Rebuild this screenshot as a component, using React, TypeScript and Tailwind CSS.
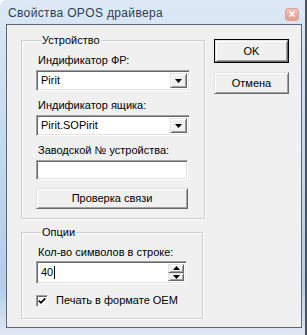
import React from "react";

const font = { fontFamily: '"Liberation Sans", Arial, sans-serif' };

const sunken =
  "border border-t-[#a0a0a0] border-l-[#a0a0a0] border-r-white border-b-white shadow-[inset_1px_1px_0_#696969,inset_-1px_-1px_0_#e3e3e3] bg-white";
const raised =
  "border border-t-[#e3e3e3] border-l-[#e3e3e3] border-r-[#696969] border-b-[#696969] shadow-[inset_1px_1px_0_#ffffff,inset_-1px_-1px_0_#a0a0a0] bg-[#f0f0f0]";

function Down() {
  return (
    <svg width="7" height="4" viewBox="0 0 7 4">
      <path d="M0 0H7L3.5 4Z" fill="#000" />
    </svg>
  );
}

function Combo({ value }: { value: string }) {
  return (
    <div className={`${sunken} h-[21px] w-[154px] flex items-center p-[2px]`}>
      <div className="flex-1 pl-[2px] text-[11px] text-black leading-none">{value}</div>
      <div className={`${raised} w-[17px] h-full flex items-center justify-center`}>
        <Down />
      </div>
    </div>
  );
}

function Label({ children, mt }: { children: React.ReactNode; mt: string }) {
  return <div className={`text-[11px] leading-[13px] h-[13px] text-black ml-[2px] ${mt}`}>{children}</div>;
}

function Group({ title, children, className }: { title: string; children: React.ReactNode; className?: string }) {
  return (
    <fieldset
      className={`border border-[#cdcdcd] shadow-[1px_1px_0_#ffffff,inset_1px_1px_0_#ffffff] px-[14px] ${className ?? ""}`}
    >
      <legend className="ml-[5px] px-[1px] text-[11px] leading-[13px] text-black">{title}</legend>
      {children}
    </fieldset>
  );
}

export default function App() {
  return (
    <div
      style={font}
      className="w-[307px] h-[335px] flex flex-col bg-[linear-gradient(180deg,#dce8f5_0%,#c6daef_40%,#b3cdea_85%,#dfe7f0_100%)] border-r-2 border-r-[#4a5260] rounded-tl-[6px] overflow-hidden"
    >
      <div className="h-[24px] shrink-0 flex items-center justify-between pl-[8px] pr-[6px]">
        <span className="text-[12px] text-[#2c3e57] tracking-[0.35px] mt-[1px]">Свойства OPOS драйвера</span>
        <div className="mt-[4px] w-[14px] h-[13px] rounded-[3px] bg-[linear-gradient(180deg,#f3c0b7,#e79a8e)] border border-[#d9a39b] flex items-center justify-center">
          <svg width="6" height="6" viewBox="0 0 6 6">
            <path d="M0.5 0.5L5.5 5.5M5.5 0.5L0.5 5.5" stroke="#fff" strokeWidth="1.5" />
          </svg>
        </div>
      </div>
      <div className="flex-1 ml-[6px] mr-[3px] mb-[7px] border border-[#5a6775] bg-[#f0f0f0] flex pl-[14px] pr-[11px] pt-[9px]">
        <div className="w-[182px] flex flex-col gap-[7px]">
          <Group title="Устройство" className="pb-[9px]">
            <Label mt="mt-[7px]">Индификатор ФР:</Label>
            <div className="mt-[3px]">
              <Combo value="Pirit" />
            </div>
            <Label mt="mt-[8px]">Индификатор ящика:</Label>
            <div className="mt-[3px]">
              <Combo value="Pirit.SOPirit" />
            </div>
            <Label mt="mt-[8px]">Заводской № устройства:</Label>
            <div className={`${sunken} mt-[3px] h-[20px] w-[152px]`} />
            <div className={`${raised} mt-[8px] h-[21px] w-[152px] flex items-center justify-center text-[11px] text-black`}>
              Проверка связи
            </div>
          </Group>
          <Group title="Опции" className="pb-[11px]">
            <Label mt="mt-[7px]">Кол-во символов в строке:</Label>
            <div className={`${sunken} mt-[2px] h-[23px] w-[151px] flex items-center p-[2px]`}>
              <div className="flex-1 pl-[2px] text-[11px] leading-none text-black flex items-center">
                40<span className="inline-block w-px h-[13px] bg-black ml-px" />
              </div>
              <div className="w-[16px] h-full flex flex-col">
                <div className={`${raised} flex-1 flex items-center justify-center`}>
                  <svg width="7" height="4" viewBox="0 0 7 4">
                    <path d="M0 4H7L3.5 0Z" fill="#000" />
                  </svg>
                </div>
                <div className={`${raised} flex-1 flex items-center justify-center`}>
                  <Down />
                </div>
              </div>
            </div>
            <div className="mt-[10px] h-[13px] flex items-center gap-[8px]">
              <div className={`${sunken} w-[12px] h-[12px] flex items-center justify-center`}>
                <svg width="8" height="8" viewBox="0 0 8 8">
                  <path d="M0.8 3.6L3 5.8L7.2 1.4" stroke="#000" strokeWidth="1.8" fill="none" />
                </svg>
              </div>
              <span className="text-[11px] leading-[13px] text-black">Печать в формате OEM</span>
            </div>
          </Group>
        </div>
        <div className="ml-[11px] mt-[5px] flex flex-col gap-[9px]">
          <div className="border border-black">
            <div className={`${raised} w-[73px] h-[22px] flex items-center justify-center text-[11px] text-black`}>OK</div>
          </div>
          <div className={`${raised} w-[75px] h-[22px] flex items-center justify-center text-[11px] text-black`}>Отмена</div>
        </div>
      </div>
    </div>
  );
}
